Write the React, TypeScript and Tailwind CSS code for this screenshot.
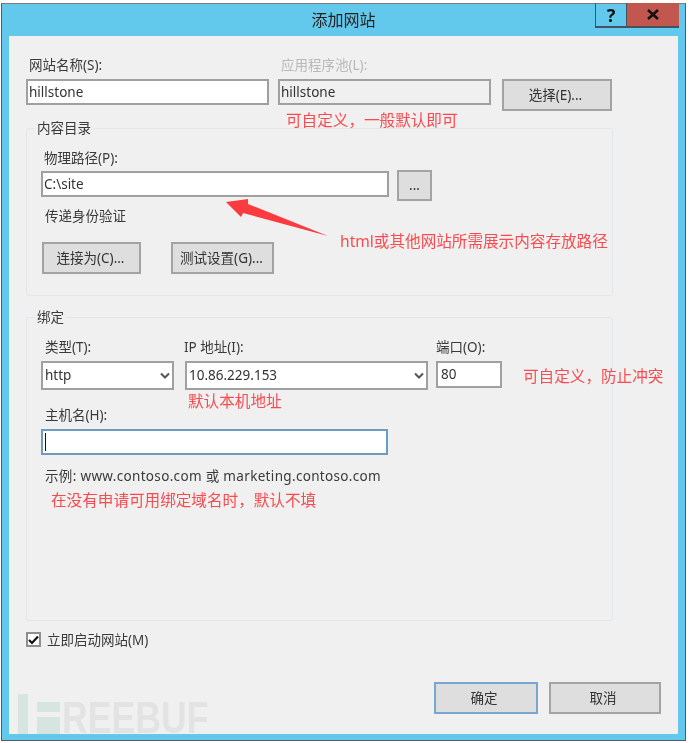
import React from "react";

const FONT = "font-['Noto_Sans','Noto_Sans_CJK_SC',sans-serif]";

const Label = ({ children, className = "" }: { children: React.ReactNode; className?: string }) => (
  <div className={`h-[18px] text-[13.5px] leading-[18px] whitespace-nowrap text-[#3a3a3a] ${className}`}>{children}</div>
);

const Field = ({ value, className = "" }: { value?: string; className?: string }) => (
  <div className={`flex items-center border-2 border-[#a0a0a0] bg-white pl-[1px] text-[13.5px] text-[#333] ${className}`}>{value}</div>
);

const Btn = ({ children, className = "" }: { children: React.ReactNode; className?: string }) => (
  <div className={`flex h-[32px] items-center justify-center border-2 border-[#a3a3a3] bg-[#dedede] text-[13.5px] text-[#333] ${className}`}>{children}</div>
);

const Chevron = () => (
  <svg width="10" height="7" viewBox="0 0 10 7" className="absolute right-[4px] top-[11px]">
    <path d="M1 1.5 L5 5.5 L9 1.5" fill="none" stroke="#555" strokeWidth="2" />
  </svg>
);

const Note = ({ children, className = "" }: { children: React.ReactNode; className?: string }) => (
  <div className={`absolute h-[20px] text-[15.6px] leading-[20px] whitespace-nowrap text-[#fb4a4f] ${className}`}>{children}</div>
);

const Group = ({ title, className = "", children }: { title: string; className?: string; children: React.ReactNode }) => (
  <div className={`relative w-[587px] rounded-[3px] border border-[#e0e7ef] ${className}`}>
    <div className="absolute left-[8px] top-[-10px] h-[18px] bg-[#f0f0f0] px-[2px] text-[13.5px] leading-[18px] text-[#3a3a3a]">{title}</div>
    {children}
  </div>
);

export default function App() {
  return (
    <div className={`relative h-[743px] w-[690px] overflow-hidden bg-white pl-[1px] pt-[3px] blur-[0.4px] ${FONT}`}>
      <div className="flex h-[738px] w-[685px] flex-col border border-[#4f5c66] border-t-[#7d7d7d] bg-[#63c9ec] px-[7px]">
        {/* title bar */}
        <div className="relative flex h-[32px] shrink-0 items-center justify-center text-[16px] text-[#222]">
          <span className="-mt-[1px]">添加网站</span>
          <div className="absolute right-[-1px] top-[-1px] flex h-[25px]">
            <div className="flex w-[32px] items-center justify-center border-x border-b-2 border-[#44545e] text-[18px] font-bold leading-none text-[#111]">?</div>
            <div className="flex w-[52px] items-center justify-center border-b-2 border-[#44545e] bg-[#c1574e]">
              <svg width="12" height="11" viewBox="0 0 12 11">
                <path d="M1 1 L11 10 M11 1 L1 10" stroke="#111" strokeWidth="2.6" />
              </svg>
            </div>
          </div>
        </div>

        {/* client area */}
        <div className="relative flex h-[698px] flex-col bg-[#f0f0f0] pl-[17px] pr-[17px] pt-[20px]">
          <div className="flex items-start">
            <div className="w-[243px]">
              <Label className="pl-[3px]">网站名称(S):</Label>
              <Field value="hillstone" className="mt-[5px] h-[26px]" />
            </div>
            <div className="ml-[9px] w-[213px]">
              <Label className="pl-[3px] !text-[#b9b9b9]">应用程序池(L):</Label>
              <Field value="hillstone" className="mt-[5px] h-[26px] !bg-[#f0f0f0]" />
            </div>
            <Btn className="ml-[11px] mt-[23px] w-[110px] pr-[3px]">选择(E)...</Btn>
          </div>

          <Group title="内容目录" className="mt-[17px] h-[168px] pl-[14px] pt-[20px]">
            <Label className="pl-[3px]">物理路径(P):</Label>
            <div className="mt-[3px] flex items-start">
              <Field value="C:\site" className="mt-[1px] h-[26px] w-[348px]" />
              <Btn className="ml-[8px] !h-[31px] w-[35px]">...</Btn>
            </div>
            <Label className="mt-[6px] pl-[4px]">传递身份验证</Label>
            <div className="mt-[17px] flex">
              <Btn className="ml-[1px] w-[99px] pr-[2px]">连接为(C)...</Btn>
              <Btn className="ml-[30px] w-[103px] pr-[2px]">测试设置(G)...</Btn>
            </div>
          </Group>

          <Group title="绑定" className="mt-[21px] h-[304px] pl-[14px] pt-[20px]">
            <div className="flex items-start">
              <div className="w-[133px]">
                <Label className="pl-[4px]">类型(T):</Label>
                <div className="relative mt-[5px]">
                  <Field value="http" className="h-[29px] pl-[2px]" />
                  <Chevron />
                </div>
              </div>
              <div className="ml-[11px] w-[243px]">
                <Label className="-ml-[1px]">IP 地址(I):</Label>
                <div className="relative mt-[5px]">
                  <Field value="10.86.229.153" className="h-[29px] pl-[2px]" />
                  <Chevron />
                </div>
              </div>
              <div className="ml-[8px] w-[66px]">
                <Label>端口(O):</Label>
                <Field value="80" className="mt-[5px] h-[27px] pl-[3px]" />
              </div>
            </div>
            <Label className="mt-[16px] pl-[4px]">主机名(H):</Label>
            <div className="mt-[5px] flex h-[26px] w-[347px] items-center border-2 border-[#6f9bc0] bg-white pl-[2px]">
              <div className="h-[18px] w-[1px] bg-[#111]" />
            </div>
            <Label className="mt-[12px] pl-[4px] tracking-[0.33px]">示例: www.contoso.com 或 marketing.contoso.com</Label>
          </Group>

          <div className="mt-[11px] flex h-[15px] items-center">
            <div className="flex h-[15px] w-[15px] items-center justify-center border-2 border-[#8f8f8f] bg-white">
              <svg width="11" height="10" viewBox="0 0 11 10">
                <path d="M1 5 L4 8 L10 1.5" fill="none" stroke="#111" strokeWidth="2.2" />
              </svg>
            </div>
            <Label className="ml-[6px]">立即启动网站(M)</Label>
          </div>

          <div className="mb-[20px] mt-auto flex justify-end gap-[11px]">
            <Btn className="w-[104px] !border-[#7aa5cf] pr-[4px]">确定</Btn>
            <Btn className="w-[112px] pr-[4px]">取消</Btn>
          </div>

          {/* watermark */}
          <div className="absolute bottom-0 left-[9px] flex h-[40px] items-end">
            <div className="h-[40px] w-[10px] bg-[#d7e5e0]" />
            <div className="ml-[9px] flex h-[32px] flex-col justify-between">
              <div className="h-[10px] w-[23px] bg-[#d7e5e0]" />
              <div className="h-[17px] w-[23px] bg-[#d7e5e0]" />
            </div>
            <span className="ml-[2px] w-[146px] origin-left scale-x-[0.81] font-['Liberation_Sans'] text-[44px] font-bold leading-[32px] text-[#e3e3e3]">REEBUF</span>
          </div>

          {/* annotations over the form */}
          <Note className="left-[277px] top-[74px]">可自定义，一般默认即可</Note>
          <Note className="left-[331px] top-[195px]">html或其他网站所需展示内容存放路径</Note>
          <Note className="left-[179px] top-[355px]">默认本机地址</Note>
          <Note className="left-[514px] top-[330px]">可自定义，防止冲突</Note>
          <Note className="left-[42px] top-[454px]">在没有申请可用绑定域名时，默认不填</Note>
          <svg width="110" height="45" viewBox="0 0 110 45" className="absolute left-[216px] top-[158px]">
            <path d="M1 8 L23 5 L23 10 L103 42 L18 19 L16 23 Z" fill="#fb3b3f" />
          </svg>
        </div>
      </div>
    </div>
  );
}
